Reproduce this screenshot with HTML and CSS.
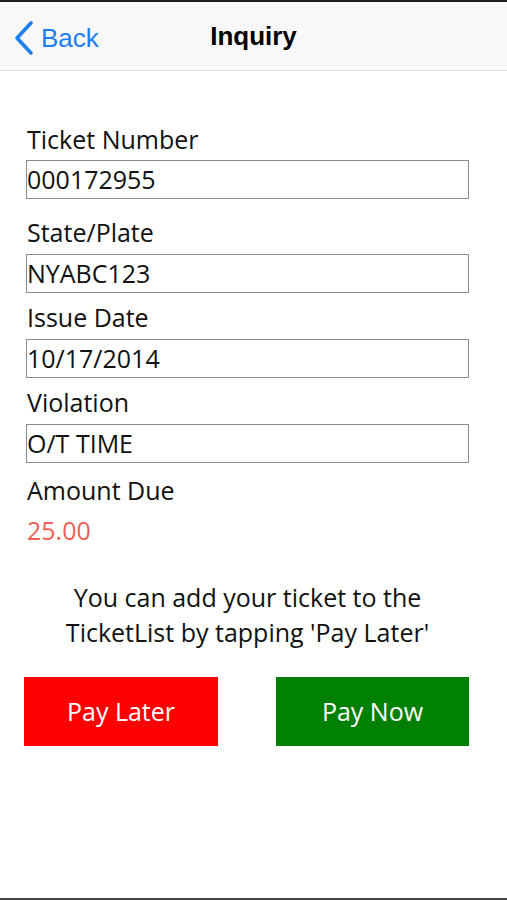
FILE: index.html
```html
<!DOCTYPE html>
<html>
<head>
<meta charset="utf-8">
<title>Inquiry</title>
<link rel="stylesheet" href="styles.css">
</head>
<body>
<div class="screen">
  <header class="navbar">
    <div class="back">
      <svg class="chev" width="20" height="36" viewBox="0 0 20 36"><path d="M17 3 L3 18 L17 33" fill="none" stroke="#1c7ef2" stroke-width="3.6" stroke-linecap="round" stroke-linejoin="round"/></svg>
      <span class="back-text">Back</span>
    </div>
    <div class="title">Inquiry</div>
  </header>
  <main class="content">
    <div class="label first">Ticket Number</div>
    <div class="field">000172955</div>
    <div class="label l2">State/Plate</div>
    <div class="field">NYABC123</div>
    <div class="label l3">Issue Date</div>
    <div class="field">10/17/2014</div>
    <div class="label l3">Violation</div>
    <div class="field">O/T TIME</div>
    <div class="label l5">Amount Due</div>
    <div class="amount">25.00</div>
    <p class="note">You can add your ticket to the<br>TicketList by tapping 'Pay Later'</p>
    <div class="actions">
      <div class="btn later">Pay Later</div>
      <div class="btn now">Pay Now</div>
    </div>
  </main>
</div>
</body>
</html>
```
FILE: styles.css
```css
html, body {
  margin: 0;
  padding: 0;
  background: #ffffff;
}
.screen {
  width: 507px;
  height: 900px;
  box-sizing: border-box;
  border-top: 2px solid #1e1e1e;
  border-bottom: 2px solid #444444;
  display: flex;
  flex-direction: column;
  overflow: hidden;
  font-family: "Open Sans", "Noto Sans", sans-serif;
  color: #111111;
}
.navbar {
  height: 68px;
  flex: none;
  background: #f8f8f8;
  border-bottom: 1px solid #dedede;
  position: relative;
  display: flex;
  align-items: center;
  justify-content: center;
}
.back {
  position: absolute;
  left: 14px;
  top: 18px;
  display: flex;
  align-items: center;
  gap: 7px;
}
.chev {
  display: block;
}
.back-text {
  font-family: "Liberation Sans", Arial, sans-serif;
  font-size: 26px;
  color: #1c7ef2;
  line-height: 36px;
}
.title {
  font-family: "Liberation Sans", Arial, sans-serif;
  font-weight: bold;
  font-size: 26px;
  color: #000000;
  line-height: 36px;
}
.content {
  display: flex;
  flex-direction: column;
  padding: 0 38px 0 26px;
}
.label {
  font-size: 25px;
  line-height: 33px;
  padding-left: 1px;
  margin-bottom: 5px;
}
.label.first { margin-top: 52px; margin-bottom: 4px; }
.label.l2 { margin-top: 17px; }
.label.l3 { margin-top: 8px; }
.label.l5 { margin-top: 11px; margin-bottom: 7px; }
.field {
  height: 39px;
  box-sizing: border-box;
  border: 1.5px solid #8c8c8c;
  font-size: 25px;
  line-height: 36px;
  padding-left: 0;
  color: #111111;
}
.amount {
  font-size: 25px;
  line-height: 33px;
  color: #ef5f55;
  padding-left: 1px;
}
.note {
  margin: 33px 0 0 0;
  font-size: 25px;
  line-height: 35px;
  text-align: center;
}
.actions {
  margin-top: 27px;
  margin-left: -2px;
  display: flex;
  justify-content: space-between;
}
.btn {
  width: 194px;
  height: 69px;
  line-height: 69px;
  text-align: center;
  color: #ffffff;
  font-size: 25px;
}
.later {
  background: #ff0000;
}
.now {
  width: 193px;
  background: #008000;
}
```
